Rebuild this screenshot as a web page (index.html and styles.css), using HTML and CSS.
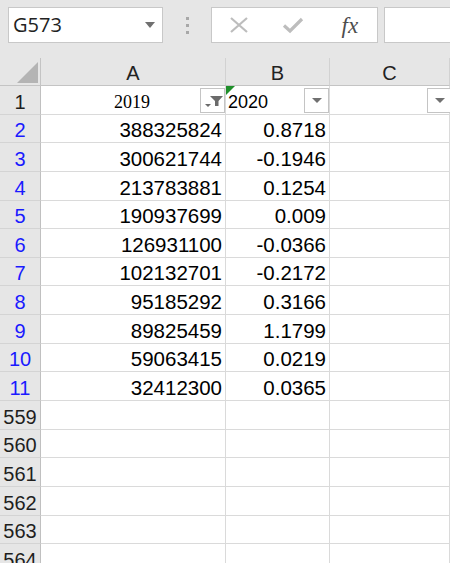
FILE: index.html
```html
<!DOCTYPE html>
<html>
<head>
<meta charset="utf-8">
<link rel="stylesheet" href="styles.css">
</head>
<body>
<div class="toolbar">
  <div class="namebox">
    <span class="name">G573</span>
    <span class="tri"></span>
  </div>
  <div class="dots"><i></i><i></i><i></i></div>
  <div class="fxbox">
    <span class="slot"><svg width="22" height="18" viewBox="0 0 22 18"><path d="M3 2 L19 16 M19 2 L3 16" stroke="#bdbdbd" stroke-width="2.2" fill="none"/></svg></span>
    <span class="slot"><svg width="22" height="18" viewBox="0 0 22 18"><path d="M2 9.5 L8 15 L20 3" stroke="#bdbdbd" stroke-width="3.2" fill="none"/></svg></span>
    <span class="slot fx">fx</span>
  </div>
  <div class="formula"></div>
</div>
<div class="sheet">
  <div class="corner"><span class="corner-tri"></span></div>
  <div class="colhead">A</div>
  <div class="colhead">B</div>
  <div class="colhead">C</div>

  <div class="rowhead dark">1</div>
  <div class="cell hdr-a"><span class="serif">2019</span><span class="fbtn"><svg width="22" height="16" viewBox="0 0 22 16"><path d="M8 3 H21 L16.5 8 V13 H13 V8 Z" fill="#6b6b6b"/><path d="M3 11 H9 L6 14 Z" fill="#6b6b6b"/></svg></span></div>
  <div class="cell hdr-b"><span class="green"></span><span class="b1">2020</span><span class="fbtn dd"><span class="dtri"></span></span></div>
  <div class="cell hdr-c"><span class="fbtn dd"><span class="dtri"></span></span></div>

  <div class="rowhead blue">2</div><div class="cell num">388325824</div><div class="cell num">0.8718</div><div class="cell"></div>
  <div class="rowhead blue">3</div><div class="cell num">300621744</div><div class="cell num">-0.1946</div><div class="cell"></div>
  <div class="rowhead blue">4</div><div class="cell num">213783881</div><div class="cell num">0.1254</div><div class="cell"></div>
  <div class="rowhead blue">5</div><div class="cell num">190937699</div><div class="cell num">0.009</div><div class="cell"></div>
  <div class="rowhead blue">6</div><div class="cell num">126931100</div><div class="cell num">-0.0366</div><div class="cell"></div>
  <div class="rowhead blue">7</div><div class="cell num">102132701</div><div class="cell num">-0.2172</div><div class="cell"></div>
  <div class="rowhead blue">8</div><div class="cell num">95185292</div><div class="cell num">0.3166</div><div class="cell"></div>
  <div class="rowhead blue">9</div><div class="cell num">89825459</div><div class="cell num">1.1799</div><div class="cell"></div>
  <div class="rowhead blue">10</div><div class="cell num">59063415</div><div class="cell num">0.0219</div><div class="cell"></div>
  <div class="rowhead blue">11</div><div class="cell num">32412300</div><div class="cell num">0.0365</div><div class="cell"></div>
  <div class="rowhead dark">559</div><div class="cell"></div><div class="cell"></div><div class="cell"></div>
  <div class="rowhead dark">560</div><div class="cell"></div><div class="cell"></div><div class="cell"></div>
  <div class="rowhead dark">561</div><div class="cell"></div><div class="cell"></div><div class="cell"></div>
  <div class="rowhead dark">562</div><div class="cell"></div><div class="cell"></div><div class="cell"></div>
  <div class="rowhead dark">563</div><div class="cell"></div><div class="cell"></div><div class="cell"></div>
  <div class="rowhead dark">564</div><div class="cell"></div><div class="cell"></div><div class="cell"></div>
</div>
</body>
</html>
```
FILE: styles.css
```css
* { box-sizing: border-box; }
html, body { margin: 0; padding: 0; }
body {
  width: 450px;
  height: 563px;
  overflow: hidden;
  background: #e6e6e6;
  font-family: "Liberation Sans", Arial, sans-serif;
}
.toolbar {
  height: 58px;
  padding: 7px 0 0 8px;
  display: flex;
  align-items: flex-start;
}
.namebox {
  width: 155px;
  height: 36px;
  background: #fff;
  border: 1px solid #c8c8c8;
  display: flex;
  align-items: center;
  padding: 0 7px 0 4px;
}
.name {
  flex: 1;
  font-family: "Open Sans", "Noto Sans", sans-serif;
  font-size: 20px;
  color: #222;
  line-height: 1;
}
.tri {
  width: 0; height: 0;
  border-left: 5.5px solid transparent;
  border-right: 5.5px solid transparent;
  border-top: 6px solid #707070;
}
.dots {
  width: 48px;
  height: 36px;
  display: flex;
  flex-direction: column;
  align-items: center;
  justify-content: center;
  gap: 4px;
}
.dots i {
  display: block;
  width: 3px; height: 3px;
  background: #a8a8a8;
}
.fxbox {
  width: 167px;
  height: 36px;
  background: #fff;
  border: 1px solid #c8c8c8;
  display: flex;
  align-items: center;
}
.slot {
  flex: 1;
  display: flex;
  justify-content: center;
  align-items: center;
}
.slot svg { display: block; }
.fx {
  font-family: "Liberation Serif", "Times New Roman", serif;
  font-style: italic;
  font-size: 23px;
  color: #4d4d4d;
  line-height: 1;
  padding-left: 2px;
}
.formula {
  flex: 1;
  height: 36px;
  margin-left: 6px;
  background: #fff;
  border: 1px solid #c8c8c8;
  border-right: none;
}
.sheet {
  display: grid;
  grid-template-columns: 41px 185px 104px 1fr;
  grid-template-rows: 28px repeat(17, 28.65px);
}
.corner {
  border-right: 1px solid #c4c4c4;
  border-bottom: 1px solid #c4c4c4;
  position: relative;
}
.corner-tri {
  position: absolute;
  right: 2px;
  bottom: 2px;
  width: 0; height: 0;
  border-left: 21px solid transparent;
  border-bottom: 21px solid #b4b4b4;
}
.colhead {
  border-right: 1px solid #d2d2d2;
  border-bottom: 1px solid #c4c4c4;
  display: flex;
  align-items: flex-end;
  justify-content: center;
  font-size: 20px;
  line-height: 23px;
  color: #222;
  padding-bottom: 0;
}
.rowhead {
  border-right: 1px solid #c0c0c0;
  border-bottom: 1px solid #d4d4d4;
  display: flex;
  align-items: flex-end;
  justify-content: center;
  font-size: 20px;
  line-height: 23px;
  white-space: nowrap;
  overflow: visible;
}
.rowhead.blue { color: #1a1aff; }
.rowhead.dark { color: #1e1e1e; }
.cell {
  background: #fff;
  border-right: 1px solid #dadada;
  border-bottom: 1px solid #dadada;
  display: flex;
  align-items: flex-end;
  font-size: 20.5px;
  line-height: 24px;
  color: #000;
  position: relative;
  white-space: nowrap;
}
.num {
  justify-content: flex-end;
  padding-right: 3px;
}
.hdr-a { justify-content: center; }
.serif {
  font-family: "Liberation Serif", "Times New Roman", serif;
  font-size: 18px;
  line-height: 22px;
  padding-right: 2px;
  padding-bottom: 1px;
}
.b1 {
  font-size: 18px;
  line-height: 22px;
  padding-left: 2px;
  padding-bottom: 1px;
}
.green {
  position: absolute;
  left: 0;
  top: 0;
  width: 0; height: 0;
  border-top: 9px solid #1f8f2a;
  border-right: 9px solid transparent;
}
.fbtn {
  position: absolute;
  right: 0;
  top: 2px;
  width: 25px;
  height: 25px;
  background: #fff;
  border: 1px solid #c4c4c4;
  display: flex;
  align-items: center;
  justify-content: center;
}
.fbtn svg { display: block; }
.hdr-c .fbtn { right: auto; left: 97px; }
.dtri {
  width: 0; height: 0;
  border-left: 5px solid transparent;
  border-right: 5px solid transparent;
  border-top: 5px solid #707070;
}
```
